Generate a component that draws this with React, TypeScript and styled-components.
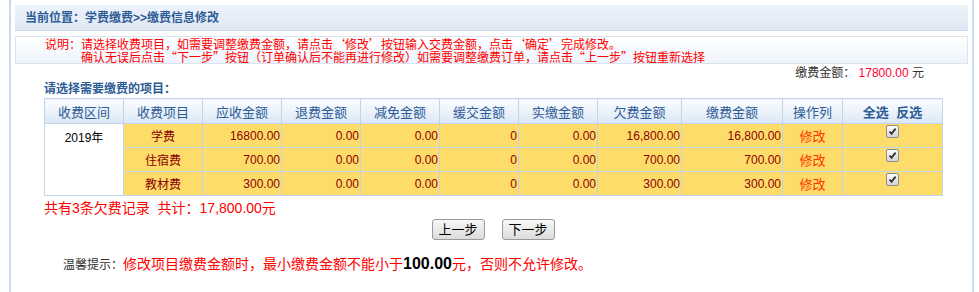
import React from 'react';
import styled, { createGlobalStyle } from 'styled-components';

const GlobalStyle = createGlobalStyle`
  html, body {
    margin: 0;
    padding: 0;
    background: #fff;
    font-family: 'Liberation Sans', 'Noto Sans CJK SC', sans-serif;
    font-size: 12px;
  }
`;

const Frame = styled.div`
  margin-left: 9px;
  width: 965px;
  min-height: 292px;
  box-sizing: border-box;
  border-left: 2px solid #c8daf0;
  border-right: 2px solid #c8daf0;
  padding-top: 5px;
`;

const LocationBar = styled.div`
  margin: 0 4px;
  height: 25px;
  border-bottom: 1px solid #c9d8ec;
  background: linear-gradient(#eef3fb, #dfe8f5);
  padding-left: 10px;
  font-weight: bold;
  color: #2d5b95;
  line-height: 26px;
`;

const NoteBox = styled.div`
  margin: 5px 4px 0;
  border: 1px solid #dbe3ee;
  background: linear-gradient(#ffffff, #eef4fc);
  padding: 0 0 0 29px;
  color: #ff0000;
  line-height: 13px;
  font-family: 'Noto Sans CJK SC', sans-serif;
`;

const NoteLine = styled.div<{ $indent?: number }>`
  padding-left: ${(p) => p.$indent || 0}px;
  white-space: nowrap;
`;

const Section = styled.div`
  margin-left: 33px;
  width: 898px;
`;

const AmountLine = styled.div`
  margin-top: 1px;
  line-height: 16px;
  text-align: right;
  padding-right: 18px;
  color: #333;
  span {
    color: #ff0033;
  }
`;

const SectionTitle = styled.div`
  line-height: 16px;
  font-weight: bold;
  color: #2d5b95;
`;

const Table = styled.table`
  margin-top: 1px;
  width: 898px;
  table-layout: fixed;
  border-collapse: collapse;
  border: 1px solid #c3d4ea;
`;

const HeadCell = styled.th<{ $strong?: boolean }>`
  height: 24px;
  padding: 0;
  border: 1px solid #c3d4ea;
  background: linear-gradient(#fbfdff, #dbe7f6);
  color: #2d5b95;
  font-size: 13px;
  font-weight: ${(p) => (p.$strong ? 'bold' : 'normal')};
  word-spacing: ${(p) => (p.$strong ? '4px' : 'normal')};
  text-align: center;
`;

const Cell = styled.td<{ $align?: string; $plain?: boolean }>`
  height: 23px;
  padding: 0 1px;
  border: 1px solid #c3d4ea;
  background: ${(p) => (p.$plain ? '#ffffff' : '#fedc6a')};
  color: ${(p) => (p.$plain ? '#000' : '#8b0000')};
  text-align: ${(p) => p.$align || 'center'};
  vertical-align: ${(p) => (p.$plain ? 'top' : 'middle')};
  padding-top: ${(p) => (p.$plain ? '3px' : '0')};
  line-height: ${(p) => (p.$plain ? '23px' : 'normal')};
  font-size: 12px;
`;

const EditLink = styled.span`
  color: #ff3300;
  font-size: 13px;
`;

const CheckBox = styled.span`
  display: inline-block;
  width: 11px;
  height: 11px;
  border: 1px solid #8d8d8d;
  border-radius: 2px;
  background: linear-gradient(#ffffff, #d4d4d4);
  position: relative;
  top: -3px;
  svg {
    display: block;
  }
`;

const Summary = styled.div`
  margin-top: 2px;
  line-height: 20px;
  font-size: 14px;
  color: #ff0000;
`;

const ButtonRow = styled.div`
  margin-top: 1px;
  display: flex;
  justify-content: center;
  gap: 17px;
`;

const StepButton = styled.button`
  width: 53px;
  height: 21px;
  padding: 0;
  border: 1px solid #9a9a9a;
  border-radius: 3px;
  background: linear-gradient(#f7f7f7, #dcdcdc);
  font-family: 'Liberation Sans', 'Noto Sans CJK SC', sans-serif;
  font-size: 13px;
  color: #000;
  line-height: 19px;
`;

const Tip = styled.div`
  margin: 14px 0 0 52px;
  line-height: 20px;
  font-size: 12px;
  color: #333;
  span {
    color: #ff0000;
    font-size: 14px;
  }
  b {
    color: #000;
    font-size: 16px;
  }
`;

const widths = [79, 79, 79, 79, 79, 79, 79, 84, 101, 60, 100];
const heads = ['收费区间', '收费项目', '应收金额', '退费金额', '减免金额', '缓交金额', '实缴金额', '欠费金额', '缴费金额', '操作列'];

const rows = [
  { name: '学费', due: '16800.00', owe: '16,800.00', pay: '16,800.00' },
  { name: '住宿费', due: '700.00', owe: '700.00', pay: '700.00' },
  { name: '教材费', due: '300.00', owe: '300.00', pay: '300.00' },
];

function Checked() {
  return (
    <CheckBox>
      <svg width="11" height="11" viewBox="0 0 11 11">
        <path d="M2.5 5.5 L4.5 7.8 L8.6 2.6" fill="none" stroke="#333" strokeWidth="1.9" />
      </svg>
    </CheckBox>
  );
}

export default function App() {
  return (
    <>
      <GlobalStyle />
      <Frame>
        <LocationBar>当前位置：学费缴费&gt;&gt;缴费信息修改</LocationBar>
        <NoteBox>
          <NoteLine>说明：请选择收费项目，如需要调整缴费金额，请点击‘修改’按钮输入交费金额，点击‘确定’完成修改。</NoteLine>
          <NoteLine $indent={36}>
            确认无误后点击“下一步”按钮（订单确认后不能再进行修改）如需要调整缴费订单，请点击“上一步”按钮重新选择
          </NoteLine>
        </NoteBox>
        <Section>
          <AmountLine>
            缴费金额： <span>17800.00</span> 元
          </AmountLine>
          <SectionTitle>请选择需要缴费的项目：</SectionTitle>
          <Table>
            <colgroup>
              {widths.map((w, i) => (
                <col key={i} style={{ width: w }} />
              ))}
            </colgroup>
            <thead>
              <tr>
                {heads.map((h) => (
                  <HeadCell key={h}>{h}</HeadCell>
                ))}
                <HeadCell $strong>全选 反选</HeadCell>
              </tr>
            </thead>
            <tbody>
              {rows.map((r, i) => (
                <tr key={r.name}>
                  {i === 0 && (
                    <Cell $plain rowSpan={3}>
                      2019年
                    </Cell>
                  )}
                  <Cell>{r.name}</Cell>
                  <Cell $align="right">{r.due}</Cell>
                  <Cell $align="right">0.00</Cell>
                  <Cell $align="right">0.00</Cell>
                  <Cell $align="right">0</Cell>
                  <Cell $align="right">0.00</Cell>
                  <Cell $align="right">{r.owe}</Cell>
                  <Cell $align="right">{r.pay}</Cell>
                  <Cell>
                    <EditLink>修改</EditLink>
                  </Cell>
                  <Cell>
                    <Checked />
                  </Cell>
                </tr>
              ))}
            </tbody>
          </Table>
          <Summary>共有3条欠费记录&nbsp;&nbsp;共计：17,800.00元</Summary>
          <ButtonRow>
            <StepButton type="button">上一步</StepButton>
            <StepButton type="button">下一步</StepButton>
          </ButtonRow>
        </Section>
        <Tip>
          温馨提示：<span>修改项目缴费金额时，最小缴费金额不能小于<b>100.00</b>元，否则不允许修改。</span>
        </Tip>
      </Frame>
    </>
  );
}
